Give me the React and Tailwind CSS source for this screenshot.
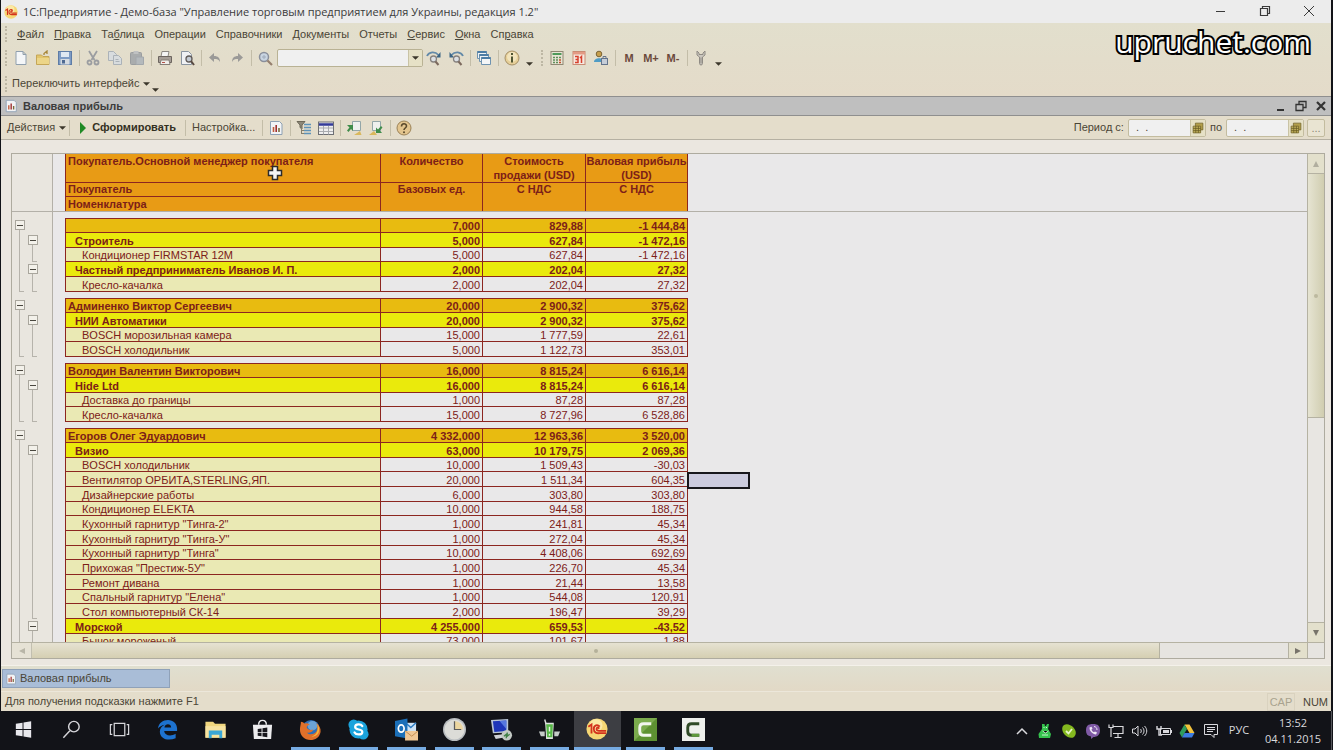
import clsx from "clsx";

const menuItems = [
  ["", "Ф", "айл"],
  ["", "П", "равка"],
  ["Та", "б", "лица"],
  ["Операции", "", ""],
  ["Справочники", "", ""],
  ["Документы", "", ""],
  ["Отчеты", "", ""],
  ["", "С", "ервис"],
  ["", "О", "кна"],
  ["Сп", "р", "авка"],
];

// level 0 - manager, 1 - customer, 2 - product
const groups = [
  [
    [0, "", "7,000", "829,88", "-1 444,84"],
    [1, "Строитель", "5,000", "627,84", "-1 472,16"],
    [2, "Кондиционер FIRMSTAR 12М", "5,000", "627,84", "-1 472,16"],
    [1, "Частный предприниматель Иванов И. П.", "2,000", "202,04", "27,32"],
    [2, "Кресло-качалка", "2,000", "202,04", "27,32"],
  ],
  [
    [0, "Админенко Виктор Сергеевич", "20,000", "2 900,32", "375,62"],
    [1, "НИИ Автоматики", "20,000", "2 900,32", "375,62"],
    [2, "BOSCH морозильная камера", "15,000", "1 777,59", "22,61"],
    [2, "BOSCH холодильник", "5,000", "1 122,73", "353,01"],
  ],
  [
    [0, "Володин Валентин Викторович", "16,000", "8 815,24", "6 616,14"],
    [1, "Hide Ltd", "16,000", "8 815,24", "6 616,14"],
    [2, "Доставка до границы", "1,000", "87,28", "87,28"],
    [2, "Кресло-качалка", "15,000", "8 727,96", "6 528,86"],
  ],
  [
    [0, "Егоров Олег Эдуардович", "4 332,000", "12 963,36", "3 520,00"],
    [1, "Визио", "63,000", "10 179,75", "2 069,36"],
    [2, "BOSCH холодильник", "10,000", "1 509,43", "-30,03"],
    [2, "Вентилятор ОРБИТА,STERLING,ЯП.", "20,000", "1 511,34", "604,35", true],
    [2, "Дизайнерские работы", "6,000", "303,80", "303,80"],
    [2, "Кондиционер ELEKTA", "10,000", "944,58", "188,75"],
    [2, 'Кухонный гарнитур "Тинга-2"', "1,000", "241,81", "45,34"],
    [2, 'Кухонный гарнитур "Тинга-У"', "1,000", "272,04", "45,34"],
    [2, 'Кухонный гарнитур "Тинга"', "10,000", "4 408,06", "692,69"],
    [2, 'Прихожая "Престиж-5У"', "1,000", "226,70", "45,34"],
    [2, "Ремонт дивана", "1,000", "21,44", "13,58"],
    [2, 'Спальный гарнитур "Елена"', "1,000", "544,08", "120,91"],
    [2, "Стол компьютерный СК-14", "2,000", "196,47", "39,29"],
    [1, "Морской", "4 255,000", "659,53", "-43,52"],
    [2, "Бычок мороженый", "73,000", "101,67", "1,88"],
  ],
];

const icons = {
  newDoc: (
    <path d="M3 1.5h7l3 3v10H3zM10 1.5v3h3" fill="#f4f6f8" stroke="#8f9fae" />
  ),
  open: (
    <>
      <path d="M1.5 5h5l1.500 1.500h6v8h-12.500z" fill="#e2c56c" stroke="#c5a657" />
      <path d="M2 8h12v6H2z" fill="#ecd588" />
      <path d="M9 5V3.500l3-2.500v3" fill="none" stroke="#a8873a" strokeWidth="1.300" />
    </>
  ),
  save: (
    <>
      <rect x="1.500" y="1.500" width="13" height="13" fill="#7d9bc4" stroke="#5e7ca6" />
      <path d="M4 2h8v5H4z" fill="#dfe8f2" />
      <path d="M3.500 9h9v5.500h-9z" fill="#d5dbe2" />
      <path d="M5 10h3v3.500H5z" fill="#4f6a92" />
    </>
  ),
  cut: (
    <g fill="none" stroke="#9b9da1" strokeWidth="1.800">
      <path d="M4 1l5.500 9M12 1L6.500 10" />
      <circle cx="4.500" cy="12.500" r="2" />
      <circle cx="11.500" cy="12.500" r="2" />
    </g>
  ),
  copy: (
    <g fill="#d8dcde" stroke="#abb2b8">
      <path d="M1.500 1.500h5l3 3v6h-8z" />
      <path d="M6.500 5.500h5l3 3v6h-8z" />
      <path d="M8.500 9.500h3M8.500 11.500h4" />
    </g>
  ),
  paste: (
    <>
      <rect x="1.500" y="2.500" width="11" height="12" rx="1" fill="#a9acad" stroke="#9a9d9f" />
      <rect x="4.500" y="1" width="5" height="3" fill="#bfc1c2" />
      <path d="M7 7h7.500v7.500H7z" fill="#b4b9bc" stroke="#a2a7ab" />
    </>
  ),
  print: (
    <>
      <path d="M5 1.500h7l-1 5H4z" fill="#f4f4f4" stroke="#8b8782" />
      <path d="M1.500 6.500h13v6h-13z" fill="#a59d96" stroke="#6c655f" />
      <path d="M4 10h8l1 4.500H3z" fill="#f1eeea" stroke="#857e77" />
      <path d="M5 12.500h3" stroke="#b3524a" />
    </>
  ),
  preview: (
    <>
      <path d="M2.500 1.500h7l3 3v10h-10z" fill="#eff1f4" stroke="#8994a0" />
      <circle cx="10" cy="9" r="3" fill="#c3cbd4" stroke="#5f5a58" strokeWidth="1.300" />
      <path d="M12 11l3 4" stroke="#594a42" strokeWidth="2" />
    </>
  ),
  undo: <path d="M2 7.500L7 3v3c4 0 6 2 6 6-1-2.500-3-3-6-3v3z" fill="#9b9a98" />,
  redo: <path d="M14 7.500L9 3v3c-4 0-6 2-6 6 1-2.500 3-3 6-3v3z" fill="#9b9a98" />,
  find: (
    <>
      <circle cx="7" cy="7" r="4.500" fill="#c9d5e2" stroke="#8a8f9b" strokeWidth="1.500" />
      <path d="M5 7h4M7 5v4" stroke="#a0abba" />
      <path d="M10.500 10.500L15 15" stroke="#96806f" strokeWidth="2.200" />
    </>
  ),
  findNext: (
    <>
      <path d="M1 6C3 1.500 9 1 12.500 5" fill="none" stroke="#6289a8" strokeWidth="1.800" />
      <path d="M14.500 2v5.500H10z" fill="#3a6484" />
      <circle cx="7.500" cy="9" r="3" fill="#dbe0e5" stroke="#85817e" strokeWidth="1.300" />
      <path d="M9.500 11.500l3 3.500" stroke="#7c695d" strokeWidth="2" />
    </>
  ),
  findPrev: (
    <>
      <path d="M15 6C13 1.500 7 1 3.500 5" fill="none" stroke="#6289a8" strokeWidth="1.800" />
      <path d="M1.500 2v5.500H6z" fill="#3a6484" />
      <circle cx="8.500" cy="9" r="3" fill="#dbe0e5" stroke="#85817e" strokeWidth="1.300" />
      <path d="M10.500 11.500l3 3.500" stroke="#7c695d" strokeWidth="2" />
    </>
  ),
  windows: (
    <>
      <path d="M1.500 1.500h9v7h-9z" fill="#eef2f5" stroke="#6f93b0" />
      <path d="M1.500 2h9" stroke="#4d7da5" strokeWidth="2" />
      <path d="M3.500 4.500h9v7h-9z" fill="#eef2f5" stroke="#6f93b0" />
      <path d="M3.500 5h9" stroke="#4d7da5" strokeWidth="2" />
      <path d="M5.500 7.500h9v7h-9z" fill="#f4f6f7" stroke="#6f93b0" />
      <path d="M5.500 8h9" stroke="#4d7da5" strokeWidth="2" />
    </>
  ),
  info: (
    <>
      <circle cx="8" cy="8" r="7" fill="#e6cf98" stroke="#a59068" />
      <circle cx="8" cy="7" r="5" fill="#f2e4bd" />
      <path d="M8 3v2M8 6.500v6" stroke="#4f5533" strokeWidth="2" />
    </>
  ),
  calc: (
    <>
      <rect x="2" y="1.500" width="12" height="13" fill="#e8e4d4" stroke="#8f8873" />
      <path d="M3.500 3h9v2h-9z" fill="#4f9a5a" />
      <path d="M4 7.500h2M7 7.500h2M10 7.500h2M4 10h2M7 10h2M4 12.500h2M7 12.500h2" stroke="#5f8f5b" strokeWidth="1.300" />
      <path d="M10 10h2M10 12.500h2" stroke="#c0502c" strokeWidth="1.300" />
    </>
  ),
  calendar: (
    <>
      <rect x="2" y="1.500" width="12" height="13" fill="#f6e9e0" stroke="#c98b74" />
      <path d="M2 2h12v2.500H2z" fill="#e39a84" />
      <path d="M4 6.500h3v6H4M4.500 9.500H7M10.500 13V6.500L9 8" fill="none" stroke="#d8402c" strokeWidth="1.500" />
    </>
  ),
  users: (
    <>
      <circle cx="6" cy="4" r="2.800" fill="#c79f4c" stroke="#7c6435" />
      <path d="M1 12c0-5 10-5 10 0z" fill="#4f9cc5" />
      <rect x="8.500" y="8.500" width="6" height="6" fill="#c5cdd8" stroke="#64748b" />
      <path d="M10 8.500V6.500h3v2" fill="none" stroke="#64748b" />
    </>
  ),
  wrench: (
    <>
      <path d="M4 1v4l2.500 2v6.500c0 2 3 2 3 0V7L12 5V1L10 3v1.500H6V3z" fill="#cac6be" stroke="#8f8b84" />
      <path d="M8 7.500v6" stroke="#8f8b84" />
    </>
  ),
  report: (
    <>
      <path d="M2.500 1.500h9l2.500 2.500v10.500H2.500z" fill="#f2f3f5" stroke="#8da0b3" />
      <path d="M5.500 12V7" stroke="#c25a3a" strokeWidth="1.600" />
      <path d="M8.200 12V5" stroke="#a03030" strokeWidth="1.600" />
      <path d="M11 12V8" stroke="#7a6a3a" strokeWidth="1.600" />
    </>
  ),
  filter: (
    <>
      <path d="M1 1.500h8L6 5v4L4 7.500V5z" fill="#8d8878" stroke="#6d6858" />
      <path d="M8 4.500h7M8 7.500h7M8 10.500h7M8 13.500h7" stroke="#5e93b9" strokeWidth="1.600" />
      <path d="M5.500 8v6M5.500 13.500H8M5.500 10.500H8" stroke="#857f6d" />
    </>
  ),
  table: (
    <>
      <rect x="0.500" y="2" width="15" height="12.500" fill="#efefef" stroke="#6d6f74" />
      <path d="M1 4.500h14" stroke="#333a9a" strokeWidth="2.500" />
      <path d="M1 8h14M1 11.500h14M5.500 6v8.500M10.500 6v8.500" stroke="#a9abaf" />
    </>
  ),
  load: (
    <>
      <path d="M6.500 1.500h8v9h-8z" fill="#eef0ee" stroke="#93a6a8" />
      <path d="M8 15l6-4 1.500 4z" fill="#d9b85c" />
      <path d="M1 5h6v6L5 9l-2.500 3L1 10.500 3.500 7.500z" fill="#3f8c4a" />
    </>
  ),
  unload: (
    <>
      <path d="M4.500 1.500h8v9h-8z" fill="#eef0ee" stroke="#93a6a8" />
      <path d="M1 15l5-4 3 4z" fill="#d9b85c" />
      <path d="M14 13H8V7.500l2 2 3-3.500 1.500 1.500-2.500 3z" fill="#3f8c4a" />
    </>
  ),
  help: (
    <>
      <circle cx="8" cy="8" r="7" fill="#e3c58e" stroke="#9b8257" />
      <path d="M5.500 6.500c0-3.500 5-3.500 5-.5C10.500 8 8 8 8 10" fill="none" stroke="#5b4a2c" strokeWidth="1.600" />
      <circle cx="8" cy="12.200" r="1" fill="#5b4a2c" />
    </>
  ),
  grid: (
    <>
      <path d="M4.500 1.500h10v9h-10z" fill="#b39f4a" stroke="#6f6228" />
      <path d="M1.500 5.500h10v9h-10z" fill="#c2b05c" stroke="#6f6228" />
      <path d="M1.500 8.500h10M1.500 11.500h10M5 5.500v9M8.500 5.500v9" stroke="#665a22" />
    </>
  ),
};

const Icon = ({ name, className = "w-4 h-4" }) => (
  <svg viewBox="0 0 16 16" className={clsx("shrink-0", className)}>
    {icons[name]}
  </svg>
);

const Logo1C = ({ className }) => (
  <svg viewBox="0 0 24 24" className={className}>
    <circle cx="12" cy="12" r="11.500" fill="#f6d774" />
    <circle cx="11" cy="8" r="7" fill="#fbe9a6" />
    <path d="M2.500 9.500L6 7v10M15 9.500C12.500 6.500 8.500 8 8.500 12s3.500 5 6.500 4.500h7M14.500 11.500c-1.500-1.500-3-1-3 .5s1 2 3 2h7.500" fill="none" stroke="#d3321c" strokeWidth="2" />
  </svg>
);

const ToolButton = ({ icon, label }) => (
  <button type="button" aria-label={label} className="w-[22px] h-5 flex items-center justify-center">
    <Icon name={icon} />
  </button>
);

const Separator = () => <div className="w-px h-4 ml-[3px] mr-[2px] bg-[#c3bda8] shrink-0" />;

const Grip = () => <div className="w-[3px] h-4 border-l-2 border-dotted border-[#bdb7a4] shrink-0" />;

const Caret = ({ className }) => (
  <svg viewBox="0 0 8 4" className={clsx("w-[7px] h-1 shrink-0", className)}>
    <path d="M0 0h8L4 4z" fill="#3c372b" />
  </svg>
);

const More = () => (
  <button type="button" aria-label="Еще" className="w-3 h-4 flex items-end justify-center">
    <Caret />
  </button>
);

const TitleBar = () => (
  <header className="h-[23px] bg-[#ececec] flex items-center pl-[3px] shrink-0">
    <Logo1C className="w-[14px] h-[14px] mr-[5px]" />
    <h1 className="font-['Open_Sans',sans-serif] text-[11px] leading-4 text-[#3b3b3b]">
      1С:Предприятие - Демо-база "Управление торговым предприятием для Украины, редакция 1.2"
    </h1>
    <div className="ml-auto flex text-[#3a3a3a]">
      <button type="button" aria-label="Свернуть" className="w-11 h-5 flex items-start pt-[3px] justify-center">
        <svg viewBox="0 0 12 12" className="w-3 h-3" fill="none" stroke="currentColor"><path d="M1 6.500h9" /></svg>
      </button>
      <button type="button" aria-label="Восстановить" className="w-11 h-5 flex items-start pt-[3px] justify-center">
        <svg viewBox="0 0 12 12" className="w-3 h-3" fill="none" stroke="currentColor" strokeWidth="1.200"><path d="M1.500 3.500h7v7h-7zM3.500 3.500v-2h7v7h-2" /></svg>
      </button>
      <button type="button" aria-label="Закрыть" className="w-11 h-5 flex items-start pt-[3px] justify-center">
        <svg viewBox="0 0 12 12" className="w-3 h-3" fill="none" stroke="currentColor"><path d="M1 1l10 10M11 1L1 11" /></svg>
      </button>
    </div>
  </header>
);

const MainMenu = () => (
  <nav className="h-[22px] flex items-center gap-2 pl-1">
    <Grip />
    {menuItems.map(([before, key, after]) => (
      <button key={before + key + after} type="button" className="px-px whitespace-nowrap">
        {before}<u className="underline-offset-1">{key}</u>{after}
      </button>
    ))}
  </nav>
);

const MainToolbar = () => (
  <div className="h-[26px] flex items-center pl-1">
    <Grip />
    <div className="w-[2px]" />
    <ToolButton icon="newDoc" label="Новый" />
    <ToolButton icon="open" label="Открыть" />
    <ToolButton icon="save" label="Сохранить" />
    <Separator />
    <ToolButton icon="cut" label="Вырезать" />
    <ToolButton icon="copy" label="Копировать" />
    <ToolButton icon="paste" label="Вставить" />
    <Separator />
    <ToolButton icon="print" label="Печать" />
    <ToolButton icon="preview" label="Просмотр" />
    <Separator />
    <ToolButton icon="undo" label="Отменить" />
    <ToolButton icon="redo" label="Повторить" />
    <Separator />
    <ToolButton icon="find" label="Найти" />
    <div className="w-[146px] h-[18px] ml-px flex border border-[#b9b294] rounded-xs bg-[#f0f0f0] overflow-hidden">
      <input type="text" aria-label="Строка поиска" className="flex-1 min-w-0 px-1 outline-none" />
      <button type="button" aria-label="Список" className="w-[14px] flex items-center justify-center bg-[#e6e1c6] border-l border-[#c9c3a5]">
        <Caret />
      </button>
    </div>
    <ToolButton icon="findNext" label="Найти следующий" />
    <ToolButton icon="findPrev" label="Найти предыдущий" />
    <Separator />
    <ToolButton icon="windows" label="Окна" />
    <Separator />
    <ToolButton icon="info" label="Справка" />
    <More />
    <div className="w-[6px]" />
    <Grip />
    <div className="w-[2px]" />
    <ToolButton icon="calc" label="Калькулятор" />
    <ToolButton icon="calendar" label="Календарь" />
    <ToolButton icon="users" label="Пользователи" />
    <Separator />
    {["M", "M+", "M-"].map((label) => (
      <button key={label} type="button" className="w-[22px] text-center font-bold text-[#6b4a3c]">
        {label}
      </button>
    ))}
    <Separator />
    <ToolButton icon="wrench" label="Сервис" />
    <More />
  </div>
);

const DateField = ({ label, id }) => (
  <>
    <label htmlFor={id} className="px-1">{label}</label>
    <div className="w-[78px] h-[18px] flex items-center border border-[#c3bc9f] rounded-xs bg-[#f0f0f0] overflow-hidden">
      <input id={id} type="text" defaultValue=" .  ." className="flex-1 min-w-0 px-1 outline-none" />
      <button type="button" aria-label="Выбрать дату" className="w-[15px] h-4 flex items-center justify-center bg-[#e6e1c6] border-l border-[#c9c3a5]">
        <Icon name="grid" className="w-3 h-3" />
      </button>
    </div>
  </>
);

const ReportHeader = () => (
  <>
    <div className="h-5 flex items-center pl-[3px] bg-[#bfbfbf] border-y border-[#8f8f8f] shrink-0">
      <Icon name="report" className="w-[14px] h-[14px]" />
      <h2 className="ml-[5px] font-bold text-[#3c3c3c]">Валовая прибыль</h2>
      <div className="ml-auto flex text-[#333]">
        <button type="button" aria-label="Свернуть окно" className="w-5 flex justify-center">
          <svg viewBox="0 0 12 12" className="w-3 h-3"><path d="M2 10h7" stroke="currentColor" strokeWidth="2" /></svg>
        </button>
        <button type="button" aria-label="Восстановить окно" className="w-5 flex justify-center">
          <svg viewBox="0 0 12 12" className="w-3 h-3" fill="none" stroke="currentColor" strokeWidth="1.300"><path d="M1 4.500h7v6H1zM4 4V1.500h7v6H8.500" /></svg>
        </button>
        <button type="button" aria-label="Закрыть окно" className="w-5 flex justify-center">
          <svg viewBox="0 0 12 12" className="w-3 h-3"><path d="M2 2l8 8M10 2l-8 8" stroke="currentColor" strokeWidth="2.200" /></svg>
        </button>
      </div>
    </div>
    <div className="h-6 flex items-center px-[6px] border-b border-[#b5b0a2] bg-[#e4ddcb] shrink-0">
      <button type="button" className="flex items-center gap-1">
        Действия <Caret />
      </button>
      <Separator />
      <button type="button" className="flex items-center gap-[6px] pl-2 pr-[6px] font-bold text-[#33301f]">
        <svg viewBox="0 0 6 12" className="w-[6px] h-3"><path d="M0 0l6 6-6 6z" fill="#1f8a25" /></svg>
        Сформировать
      </button>
      <Separator />
      <button type="button" className="px-1">Настройка...</button>
      <Separator />
      <ToolButton icon="report" label="Отчет" />
      <Separator />
      <ToolButton icon="filter" label="Отбор" />
      <ToolButton icon="table" label="Заголовок" />
      <Separator />
      <ToolButton icon="load" label="Загрузить настройки" />
      <ToolButton icon="unload" label="Сохранить настройки" />
      <Separator />
      <ToolButton icon="help" label="Помощь" />
      <div className="ml-auto flex items-center">
        <DateField id="from" label="Период с:" />
        <DateField id="to" label="по" />
        <button type="button" className="w-[18px] h-[18px] ml-[3px] rounded-xs border border-[#c3bc9f] bg-[#e9e4d2] text-[#8b8675] leading-3">
          ...
        </button>
      </div>
    </div>
  </>
);

const TreeMark = ({ kind }) => {
  if (kind === "box") {
    return (
      <div className="h-full w-[10px] flex flex-col pt-[2px]">
        <button type="button" aria-label="Свернуть группу" className="w-[10px] h-[10px] shrink-0 flex items-center justify-center border border-[#a9a69d] bg-[#f3f1ea]">
          <span className="w-[6px] h-px bg-[#4a473f]" />
        </button>
        <div className="flex-1 ml-1 w-[5px] border-l border-[#b6b3ab]" />
      </div>
    );
  }
  if (kind === "line") return <div className="h-full ml-1 w-[5px] border-l border-[#b6b3ab]" />;
  if (kind === "end") return <div className="h-full ml-1 w-[5px] border-l border-b border-[#b6b3ab]" />;
  return null;
};

const Gutter = ({ outer, inner, className = "" }) => (
  <>
    <td className={clsx("h-[inherit] p-0 pl-[3px] bg-[#e9e6df]", className)}><TreeMark kind={outer} /></td>
    <td className={clsx("h-[inherit] p-0 bg-[#e9e6df] border-r border-[#b3b0a8]", className)}><TreeMark kind={inner} /></td>
    <td className={clsx("p-0", className)} />
  </>
);

const rowStyle = ["bg-[#e8bb10] font-bold", "bg-[#eaea0c] font-bold", ""];
const nameStyle = ["pl-[2px]", "pl-[9px]", "pl-4 bg-[#eae9b4]"];
const cell = "p-0 pt-px align-bottom leading-[12px] border-r border-b border-[#8c2620] whitespace-nowrap";

const Row = ({ rows, index, isLast }) => {
  const [level, name, qty, cost, profit, selected] = rows[index];
  const next = rows[index + 1];
  const inner = level === 0 ? null : level === 1 ? "box" : (!next && !isLast) || next?.[0] === 1 ? "end" : "line";
  const outer = level === 0 ? "box" : !next && !isLast ? "end" : "line";
  const top = level === 0 && "border-t";

  return (
    <tr className="h-[15px] nth-[3n]:h-[14px] text-[#7c2018]">
      <Gutter outer={outer} inner={inner} />
      <td className={clsx(cell, top, "border-l", rowStyle[level], nameStyle[level])}>{name}</td>
      {[qty, cost, profit].map((value, i) => (
        <td key={i} className={clsx(cell, top, rowStyle[level], "pr-[2px] text-right")}>{value}</td>
      ))}
      <td className="p-0 relative">
        {selected && <div className="absolute -left-px top-0 w-[63px] h-[17px] border-2 border-[#17171c] bg-[#cbcbde]" />}
      </td>
    </tr>
  );
};

const headCell = "p-0 align-top font-bold border-r border-[#8c2620] bg-[#e89b15]";

const ReportTable = () => (
  <table className="w-full table-fixed border-separate border-spacing-0 text-[11px] text-[#7c2018]">
    <colgroup>
      <col className="w-4" />
      <col className="w-[25px]" />
      <col className="w-3" />
      <col className="w-[316px]" />
      <col className="w-[102px]" />
      <col className="w-[103px]" />
      <col className="w-[102px]" />
      <col />
    </colgroup>
    <thead>
      <tr className="h-[29px] leading-[14px]">
        <Gutter />
        <th className={clsx(headCell, "relative border-l border-b pl-[2px] text-left")}>
          Покупатель.Основной менеджер покупателя
          <svg viewBox="0 0 16 16" className="absolute left-[201px] top-[11px] w-4 h-4">
            <path d="M5.500 1.500h5v4h4v5h-4v4h-5v-4h-4v-5h4z" fill="#f4f4f4" stroke="#2b2b2b" strokeWidth="1.500" />
          </svg>
        </th>
        <th className={clsx(headCell, "border-b")}>Количество</th>
        <th className={clsx(headCell, "border-b")}>Стоимость<br />продажи (USD)</th>
        <th className={clsx(headCell, "border-b")}>Валовая прибыль<br />(USD)</th>
        <td />
      </tr>
      <tr className="h-[14px] leading-[13px]">
        <Gutter />
        <th className={clsx(headCell, "border-l border-b pl-[2px] text-left")}>Покупатель</th>
        <th rowSpan={2} className={headCell}>Базовых ед.</th>
        <th rowSpan={2} className={headCell}>С НДС</th>
        <th rowSpan={2} className={headCell}>С НДС</th>
        <td />
      </tr>
      <tr className="h-[14px] leading-[13px]">
        <Gutter />
        <th className={clsx(headCell, "border-l pt-px pl-[2px] text-left")}>Номенклатура</th>
        <td />
      </tr>
      <tr className="h-[7px]">
        <Gutter className="border-t border-[#b3b0a8]" />
        <td colSpan={5} className="p-0 border-t border-[#b3b0a8]" />
      </tr>
    </thead>
    {groups.map((rows, g) => [
      <tbody key={g}>
        {rows.map((row, i) => (
          <Row key={i} rows={rows} index={i} isLast={g === groups.length - 1} />
        ))}
      </tbody>,
      <tbody key={`gap-${g}`}>
        <tr className="h-[6px]">
          <Gutter />
          <td colSpan={5} className="p-0" />
        </tr>
      </tbody>,
    ])}
  </table>
);

const Arrow = ({ d, color = "#77736a" }) => (
  <svg viewBox="0 0 8 8" className="w-2 h-2"><path d={d} fill={color} /></svg>
);

const Sheet = () => (
  <main className="flex-1 min-h-0 flex flex-col bg-[#ebe7e0] pl-[10px] pr-[6px] pt-[13px] pb-[6px]">
    <div className="flex-1 min-h-0 flex flex-col border border-[#aeab9f]">
      <div className="flex-1 min-h-0 flex">
        <div className="flex-1 min-w-0 overflow-hidden bg-[#e9e8e9]">
          <ReportTable />
        </div>
        <div className="w-[17px] flex flex-col border-l border-[#b5b2a2] bg-[#e8e6e2]">
          <button type="button" aria-label="Вверх" className="h-5 flex items-center justify-center border-b border-[#b5b2a2] bg-[#e3e0cc]">
            <Arrow d="M4 1l3 6H1z" color="#b1ae9f" />
          </button>
          <div className="h-[244px] flex items-center justify-center border-b border-[#b5b2a2] bg-linear-to-r from-[#e6e4d2] to-[#d0cdb0]">
            <span className="w-1 h-1 rounded-full bg-[#bcb99f]" />
          </div>
          <button type="button" aria-label="Вниз" className="h-5 mt-auto flex items-center justify-center border-t border-[#b5b2a2] bg-[#e3e0cc]">
            <Arrow d="M1 1h6L4 7z" />
          </button>
        </div>
      </div>
      <div className="h-4 flex border-t border-[#b5b2a2] bg-[#e6e4e0]">
        <button type="button" aria-label="Влево" className="w-5 flex items-center justify-center border-r border-[#c2bfb0] bg-[#e6e2d5]">
          <Arrow d="M7 1v6L1 4z" color="#b9b6a8" />
        </button>
        <div className="w-[86%] flex items-center justify-center border-r border-[#b5b2a2] bg-linear-to-b from-[#e6e2d2] to-[#d5cfb2]">
          <span className="w-1 h-1 rounded-full bg-[#b5b19a]" />
        </div>
        <button type="button" aria-label="Вправо" className="w-5 ml-auto flex items-center justify-center border-x border-[#b5b2a2] bg-[#e3e0cc]">
          <Arrow d="M1 1v6l6-3z" />
        </button>
        <div className="w-4" />
      </div>
    </div>
  </main>
);

const Footer = () => (
  <>
    <div className="h-[26px] flex items-center pl-px border-t border-[#f4f1ea] bg-linear-to-b from-[#e0dfd0] to-[#e2d9c6] shrink-0">
      <button type="button" className="w-[168px] h-[19px] flex items-center gap-[3px] pl-[2px] bg-[#a9bdd7] border border-[#8fa1b8]">
        <Icon name="report" className="w-3 h-3" />
        Валовая прибыль
      </button>
    </div>
    <div className="h-5 flex items-center pl-1 border-t border-[#ece7da] shrink-0">
      <span>Для получения подсказки нажмите F1</span>
      <div className="ml-auto flex gap-2 pr-[3px]">
        <span className="w-7 text-center text-[#a9a38f] border border-[#d9d2bf] leading-4">CAP</span>
        <span className="leading-[18px]">NUM</span>
      </div>
    </div>
  </>
);

const apps = [
  {
    name: "Пуск",
    art: <path d="M4 6l7-1v6.500H4zM12 4.800l8-1.300v8h-8zM4 12.500h7V19l-7-1zM12 12.500h8v8l-8-1.300z" fill="#e8e8ec" />,
  },
  {
    name: "Поиск",
    art: <path d="M20 9a5.500 5.500 0 1 1-11 0 5.500 5.500 0 0 1 11 0zM10.500 13L3.500 20.500" fill="none" stroke="#d5d5d9" strokeWidth="1.500" />,
  },
  {
    name: "Представление задач",
    art: <path d="M6.500 5.500h11v13h-11zM4.500 7h-2v10h2M19.500 7h2v10h-2" fill="none" stroke="#d5d5d9" strokeWidth="1.300" />,
  },
  {
    name: "Edge",
    art: <path d="M2 11C3 5 7 2 12.500 2 18 2 22 6 22 11v2.500H8.500c.5 5 7 6 12 3V21C13 24.500 4 22 4 14c0-3 2-5.500 5-7-3 .5-5.500 2-7 4zM8.800 10h7c0-4.500-6.500-4.500-7 0z" fill="#1d72cf" />,
  },
  {
    name: "Проводник",
    art: (
      <>
        <path d="M1.500 4h8l2 2h11v14.500h-21z" fill="#f0d67e" />
        <path d="M1.500 8.500h21v12h-21z" fill="#f7e3a0" />
        <path d="M5 13h14v8h-3v-3.500H8V21H5z" fill="#3aa7d6" />
      </>
    ),
  },
  {
    name: "Магазин",
    art: (
      <>
        <path d="M2 7h20l-1 15H3z" fill="#ececee" />
        <path d="M8 7c0-6 8-6 8 0" fill="none" stroke="#ececee" strokeWidth="1.500" />
        <path d="M7 11.500l4-.6v3.600H7zM12 10.700l5-.7v4.500h-5zM7 15.500h4V19l-4-.5zM12 15.500h5V20l-5-.8z" fill="#17171c" />
      </>
    ),
  },
  {
    name: "Firefox",
    open: true,
    art: (
      <>
        <circle cx="12.500" cy="11" r="9" fill="#2d6fb8" />
        <circle cx="14" cy="8" r="5" fill="#6ba3d6" />
        <path d="M2 4c1.500 0 3 1 4 2 2-1 4 0 5 1-2 .5-3 1.500-3 3 1 2.500 4 3 7 2-1 3-5 4-7 3 3 3.500 10 2 11-3 .5-3 0-5-1-7 3 2.500 5 6 4.500 9.500C21.500 20 17 23 12 23 5.500 23 1 18.500 1 12c0-3 1-5 1-8z" fill="#e0702a" />
        <path d="M19 6c2 3 2.500 6 1.500 9-1.500 3-4.500 4.500-7.500 4.500 6-2 7.500-7 6-13.500z" fill="#f3b83d" />
      </>
    ),
  },
  {
    name: "Skype",
    open: true,
    art: (
      <>
        <circle cx="12" cy="12" r="9.500" fill="#1ba3dc" />
        <circle cx="7" cy="7" r="5.500" fill="#1ba3dc" />
        <circle cx="17" cy="17" r="5.500" fill="#1ba3dc" />
        <path d="M16 8.500c-1.500-2.500-7.500-2.500-7.500 1 0 3.500 7.500 1.500 7.500 5 0 3.500-6.500 3.500-8.200.5" fill="none" stroke="#fff" strokeWidth="2.300" strokeLinecap="round" />
      </>
    ),
  },
  {
    name: "Outlook",
    open: true,
    art: (
      <>
        <path d="M11 5h11v10H11z" fill="#cfe3f5" />
        <path d="M11 5l5.500 5L22 5" fill="none" stroke="#2d7dc4" strokeWidth="1.500" />
        <path d="M0 3l13-2.500v21L0 19z" fill="#1b6fb8" />
        <ellipse cx="6.500" cy="11" rx="3" ry="3.800" fill="none" stroke="#fff" strokeWidth="1.800" />
        <path d="M10.500 13.500H24v10H10.500z" fill="#f0c795" />
        <path d="M10.500 13.500l7 5.500 6.500-5.500" fill="none" stroke="#c08a4e" />
      </>
    ),
  },
  {
    name: "Часы",
    open: true,
    art: (
      <>
        <circle cx="12" cy="12" r="12" fill="#b9bdc0" />
        <circle cx="12" cy="12" r="10.500" fill="#dcdcd8" />
        <path d="M12 12V3a9 9 0 0 1 9 9z" fill="#ecd6a0" />
        <path d="M12 3.500V12h7" fill="none" stroke="#5b5b5b" strokeWidth="1.300" />
      </>
    ),
  },
  {
    name: "Удаленный рабочий стол",
    open: true,
    art: (
      <>
        <path d="M1 2l18-1v14L3 16z" fill="#b8c5d6" />
        <path d="M3 3.500l14-1v11l-12.500 1z" fill="#1e36b8" />
        <path d="M10 3l7-.5v9z" fill="#5577e0" />
        <path d="M4 18l10-1 2 3-10 2z" fill="#cfd2d6" />
        <circle cx="17.500" cy="18" r="5.500" fill="#c3c9c5" />
        <path d="M14.500 19l2.500-2v4M20.500 17L18 19v-4" fill="none" stroke="#3f7f45" strokeWidth="1.300" />
      </>
    ),
  },
  {
    name: "Телефон",
    open: true,
    art: (
      <>
        <path d="M7 1.500l1.500 5" stroke="#d7dad8" strokeWidth="1.500" />
        <path d="M7.500 5h9l-1 17h-7z" fill="#dfe5df" />
        <path d="M8.500 6.500h7L15 20H9.500z" fill="#57b647" />
        <path d="M12 9v5M12 16.500v2" stroke="#e8f5e4" strokeWidth="1.500" />
        <path d="M1 14h6v5H3zM17 14h6l-2 5h-4z" fill="#c5cbc8" />
      </>
    ),
  },
  { name: "1С:Предприятие", open: true, active: true, art: null },
  {
    name: "Camtasia Studio",
    open: true,
    art: (
      <>
        <path d="M0 0h24v24H0z" fill="#5d9132" />
        <path d="M0 0h24L0 24z" fill="#7bab4d" />
        <path d="M18 6h-8c-3 0-4 1.500-4 4v4c0 2.500 1 4 4 4h8" fill="none" stroke="#f2f5ee" strokeWidth="3" />
      </>
    ),
  },
  {
    name: "Camtasia Recorder",
    open: true,
    art: (
      <>
        <path d="M0 0h24v24H0z" fill="#eef0ec" />
        <path d="M18 6h-8c-3 0-4 1.500-4 4v4c0 2.500 1 4 4 4h8" fill="none" stroke="#2f4a26" strokeWidth="3" />
        <path d="M10 18h8" stroke="#5f9a3c" strokeWidth="3" />
      </>
    ),
  },
];

const tray = [
  { name: "Показать скрытые значки", art: <path d="M3 11l5-5 5 5" fill="none" stroke="#d9d9dd" strokeWidth="1.500" /> },
  {
    name: "ICQ",
    art: (
      <>
        <path d="M5 1h2.500L8 3h1l1-2h2l-1 5 3 5-1 4H2l-.5-4L5 6z" fill="#35c24d" />
        <path d="M6.500 4.500h1M9 4.500h1M5.500 8l3 2 3-2M5 12h6" stroke="#c8f5cf" />
      </>
    ),
  },
  {
    name: "Агент",
    art: (
      <>
        <path d="M3 2c3-2 7 0 9 2 3 3 4 7 1 10-3 2-7 0-9-2C1 9 0 4 3 2z" fill="#84b81f" />
        <path d="M5 8l2.500 2.500L11 6" fill="none" stroke="#e7f4c8" strokeWidth="1.800" />
      </>
    ),
  },
  {
    name: "Viber",
    art: (
      <>
        <path d="M8 1c5 0 7 2 7 6.500S12 14 8.500 14L6 16v-2.500C2.500 13 1 11 1 7.500 1 3 3 1 8 1z" fill="#7f5aa5" />
        <path d="M4.500 4.500c0 4 3 6.500 6.500 7l1-2-2-1-1 .7C7.500 8.500 7 8 6.500 6.500l1-1-1-1.800z" fill="#efe8f5" />
        <path d="M9 3.500c2 .3 3 1.500 3 3.500" fill="none" stroke="#efe8f5" />
      </>
    ),
  },
  { name: "Сеть", art: <path d="M5.500 3.500h9.500v7H5M10 10.500v3.500M6.500 14.500h7M1 1.500v3h4v-3M3 4.500v9.500" fill="none" stroke="#d9d9dd" strokeWidth="1.200" /> },
  { name: "Громкость", art: <path d="M.5 6h2.500l3-3v10l-3-3H.5zM8.500 6c1 1 1 3 0 4M10.500 4.500c2 2 2 5 0 7M12.500 3c3 3 3 7 0 10" fill="none" stroke="#d9d9dd" /> },
  {
    name: "Батарея",
    art: (
      <>
        <path d="M4.500 5.500h10v6h-10z" fill="none" stroke="#d9d9dd" />
        <path d="M7 7h6v3H7zM14.500 7h1.500v3h-1.500z" fill="#d9d9dd" />
        <path d="M1 3v3h4V3M3 6v6h3" fill="none" stroke="#d9d9dd" strokeWidth="1.400" />
      </>
    ),
  },
  {
    name: "Google Диск",
    art: (
      <>
        <path d="M5.500 1.500h5l5 8.500h-5z" fill="#f3c33c" />
        <path d="M5.500 1.500L8 6l-5 8.500L.500 10z" fill="#2f9c5c" />
        <path d="M5.500 10h10L13 14.500H3z" fill="#3d7be0" />
      </>
    ),
  },
  { name: "Уведомления", art: <path d="M1.500 1.500h13v10H11v3l-3-3H1.500zM4 4.500h8M4 6.500h8M4 8.500h6" fill="none" stroke="#d9d9dd" /> },
];

const Taskbar = () => (
  <footer className="h-[39px] flex bg-[#121318] text-[#d9d9dd] font-['Open_Sans',sans-serif] text-[11px] shrink-0">
    <div className="w-[717px] grid grid-cols-15">
      {apps.map((app) => (
        <button key={app.name} type="button" aria-label={app.name} className={clsx("flex flex-col items-center", app.active && "bg-[#3d3e43]")}>
          <span className="flex-1 flex items-center">
            {app.active ? (
              <Logo1C className="w-[22px] h-[22px]" />
            ) : (
              <svg viewBox="0 0 24 24" className="w-[23px] h-[23px]">{app.art}</svg>
            )}
          </span>
          {app.open && <span className={clsx("h-[3px] bg-[#76abe2]", app.active ? "w-full" : "w-[39px]")} />}
          {!app.open && <span className="h-[3px]" />}
        </button>
      ))}
    </div>
    <div className="ml-auto flex items-center">
      <div className="w-[213px] grid grid-cols-9">
        {tray.map((item) => (
          <button key={item.name} type="button" aria-label={item.name} className="flex justify-center">
            <svg viewBox="0 0 16 16" className="w-4 h-4">{item.art}</svg>
          </button>
        ))}
      </div>
      <span className="w-8 text-center">РУС</span>
      <div className="w-[76px] text-center leading-4">
        <div>13:52</div>
        <div>04.11.2015</div>
      </div>
      <div className="w-[2px] h-full border-l border-[#55565b]" />
    </div>
  </footer>
);

const App = () => (
  <div className="h-screen flex flex-col bg-[#121318] font-['Liberation_Sans',Arial,sans-serif] text-[11px] text-[#4a4536]">
    <div className="relative flex-1 min-h-0 flex flex-col ml-px mr-[2px] bg-[#e4ddcb]">
      <TitleBar />
      <div className="h-[73px] flex flex-col bg-linear-to-b from-[#e2dfcd] to-[#e4dbc9] shrink-0">
        <MainMenu />
        <MainToolbar />
        <div className="h-[25px] flex items-center pl-1">
          <Grip />
          <button type="button" className="flex items-center gap-[3px] pl-1">
            Переключить интерфейс <Caret />
          </button>
          <More />
        </div>
      </div>
      <ReportHeader />
      <Sheet />
      <Footer />
      <div className="absolute right-5 top-[22px] font-['Open_Sans',sans-serif] text-[30px] leading-10 text-white [-webkit-text-stroke:4px_black] [paint-order:stroke]">
        upruchet.com
      </div>
    </div>
    <Taskbar />
  </div>
);

export default App;
